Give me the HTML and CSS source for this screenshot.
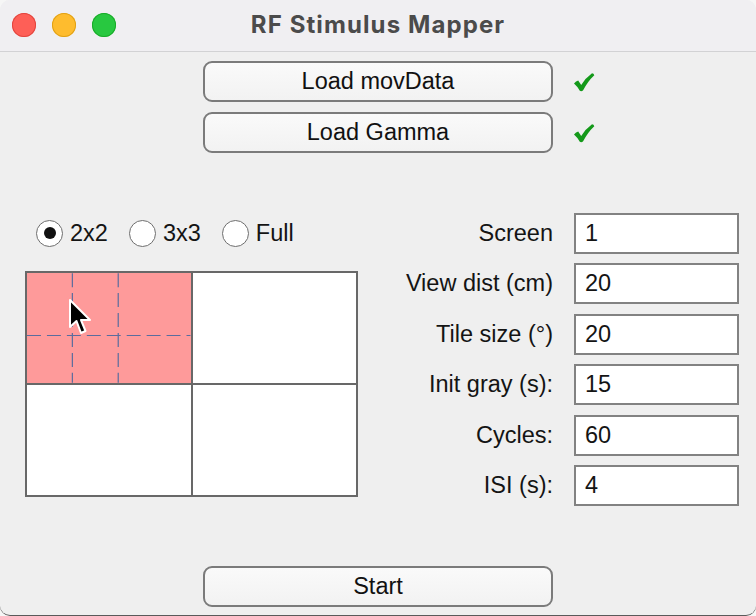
FILE: index.html
```html
<!DOCTYPE html>
<html>
<head>
<meta charset="utf-8">
<link rel="stylesheet" href="styles.css">
</head>
<body>
<div class="window">
  <div class="titlebar">
    <div class="lights">
      <span class="light red"></span>
      <span class="light yellow"></span>
      <span class="light green"></span>
    </div>
    <div class="title">RF Stimulus Mapper</div>
    <div></div>
  </div>
  <div class="content">
    <div class="loads">
      <div class="loadrow">
        <button class="btn">Load movData</button>
        <svg class="check" width="22" height="20" viewBox="0 0 22 20"><path d="M1 11.5 Q3 9.3 5.2 8.6 L8.2 13 Q12.5 6 19 1.3 Q20.8 1.5 21.3 3.2 Q14.5 9.5 10 18.6 Q8.2 19.6 6.8 18.8 Q4.5 14.5 1 11.5 Z" fill="#14991a"/></svg>
      </div>
      <div class="loadrow">
        <button class="btn">Load Gamma</button>
        <svg class="check" width="22" height="20" viewBox="0 0 22 20"><path d="M1 11.5 Q3 9.3 5.2 8.6 L8.2 13 Q12.5 6 19 1.3 Q20.8 1.5 21.3 3.2 Q14.5 9.5 10 18.6 Q8.2 19.6 6.8 18.8 Q4.5 14.5 1 11.5 Z" fill="#14991a"/></svg>
      </div>
    </div>
    <div class="main">
      <div class="left">
        <div class="radios">
          <label class="radio"><span class="dot on"></span>2x2</label>
          <label class="radio"><span class="dot"></span>3x3</label>
          <label class="radio"><span class="dot"></span>Full</label>
        </div>
        <div class="tiles">
          <div class="tile active">
            <svg class="dashes" width="164" height="110" viewBox="0 0 164 110">
              <line x1="45.5" y1="0" x2="45.5" y2="110" />
              <line x1="91.5" y1="0" x2="91.5" y2="110" />
              <line x1="0" y1="62.5" x2="164" y2="62.5" />
            </svg>
            <svg class="cursor" width="26" height="38" viewBox="0 0 26 38"><path d="M2 2 L2 29 L8.5 23 L13 35 L17.5 33 L13 22 L22 22 Z" fill="#000" stroke="#fff" stroke-width="2" stroke-linejoin="round"/></svg>
          </div>
          <div class="tile"></div>
          <div class="tile"></div>
          <div class="tile"></div>
        </div>
      </div>
      <div class="form">
        <label class="lbl">Screen</label><div class="field">1</div>
        <label class="lbl">View dist (cm)</label><div class="field">20</div>
        <label class="lbl">Tile size (°)</label><div class="field">20</div>
        <label class="lbl">Init gray (s):</label><div class="field">15</div>
        <label class="lbl">Cycles:</label><div class="field">60</div>
        <label class="lbl">ISI (s):</label><div class="field">4</div>
      </div>
    </div>
    <div class="startrow">
      <button class="btn">Start</button>
    </div>
  </div>
</div>
</body>
</html>
```

FILE: styles.css
```css
* { box-sizing: border-box; }
html, body { margin: 0; padding: 0; }
body {
  width: 756px;
  height: 616px;
  background: #f6f6f6;
  font-family: "Liberation Sans", Arial, sans-serif;
  color: #141414;
  overflow: hidden;
}
.window {
  width: 756px;
  height: 616px;
  display: flex;
  flex-direction: column;
  background: #efefef;
  border-radius: 10px;
  border-bottom: 1px solid #5a5a5a;
  overflow: hidden;
}
.titlebar {
  height: 52px;
  flex: none;
  display: grid;
  grid-template-columns: 1fr auto 1fr;
  align-items: center;
  background: #f0eff2;
  border-bottom: 1px solid #d2d2d4;
  padding-bottom: 3px;
}
.lights {
  display: flex;
  gap: 16px;
  padding-left: 12px;
  padding-top: 2px;
}
.light {
  width: 24px;
  height: 24px;
  border-radius: 50%;
  display: block;
}
.red { background: #fe5f57; box-shadow: inset 0 0 0 1px #e2463f; }
.yellow { background: #febc2e; box-shadow: inset 0 0 0 1px #e1a116; }
.green { background: #28c840; box-shadow: inset 0 0 0 1px #1aab29; }
.title {
  font-family: Inter, "Liberation Sans", sans-serif;
  font-weight: 700;
  font-size: 24px;
  color: #4b4b4b;
  letter-spacing: 1.1px;
}
.content {
  flex: 1;
  display: flex;
  flex-direction: column;
}
.loads {
  display: flex;
  flex-direction: column;
  gap: 10px;
  padding-top: 9px;
  padding-left: 203px;
}
.loadrow {
  display: flex;
  align-items: center;
  gap: 20px;
}
.btn {
  width: 350px;
  height: 41px;
  border: 2px solid #7b7b7b;
  border-radius: 9px;
  background: linear-gradient(#fafafa, #f2f2f2);
  font-family: "Liberation Sans", Arial, sans-serif;
  font-size: 23.5px;
  color: #111;
  padding: 0;
  padding-bottom: 1px;
}
.check { display: block; margin-top: 1px; }
.main {
  display: flex;
  margin-top: 60px;
  padding-left: 25px;
  padding-right: 17px;
}
.left {
  width: 333px;
  flex: none;
}
.radios {
  height: 40px;
  display: flex;
  align-items: center;
  gap: 21px;
  padding-left: 11px;
  font-size: 23.5px;
}
.radio {
  display: flex;
  align-items: center;
  gap: 7px;
}
.dot {
  width: 27px;
  height: 27px;
  border-radius: 50%;
  border: 1.5px solid #6e6e6e;
  background: #fff;
  display: flex;
  align-items: center;
  justify-content: center;
}
.dot.on::after {
  content: "";
  width: 12px;
  height: 12px;
  border-radius: 50%;
  background: #111;
}
.tiles {
  margin-top: 18px;
  width: 333px;
  height: 226px;
  display: grid;
  grid-template-columns: 1fr 1fr;
  grid-template-rows: 1fr 1fr;
  gap: 2px;
  background: #686868;
  border: 2px solid #686868;
}
.tile {
  background: #fff;
  position: relative;
}
.tile.active {
  background: #fe9a9a;
}
.dashes {
  position: absolute;
  left: 0;
  top: 0;
  width: 100%;
  height: 100%;
}
.dashes line {
  stroke: #5a6c9e;
  stroke-width: 1.2;
  stroke-dasharray: 14 6;
}
.cursor {
  position: absolute;
  left: 41px;
  top: 25px;
}
.form {
  flex: 1;
  display: grid;
  grid-template-columns: auto 165px;
  justify-content: end;
  column-gap: 21px;
  row-gap: 9.4px;
  font-size: 23.5px;
}
.lbl {
  height: 41px;
  display: flex;
  align-items: center;
  justify-content: flex-end;
}
.field {
  height: 41px;
  border: 2px solid #828282;
  background: #fff;
  padding-left: 9px;
  display: flex;
  align-items: center;
}
.startrow {
  margin-top: auto;
  padding-left: 203px;
  padding-bottom: 8px;
}
```
